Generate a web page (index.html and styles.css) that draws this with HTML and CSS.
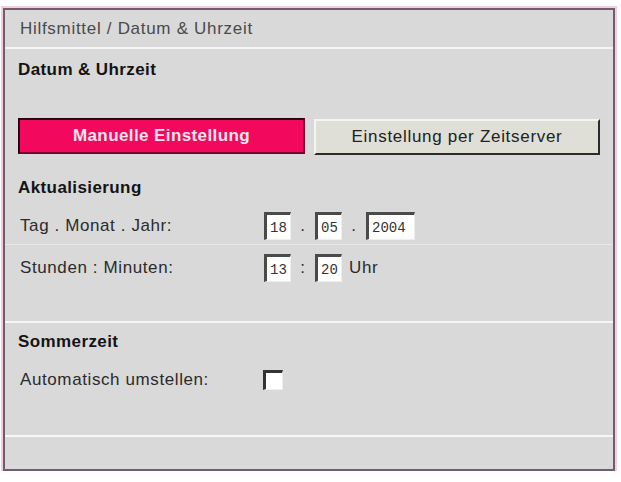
FILE: index.html
```html
<!DOCTYPE html>
<html lang="de">
<head>
  <meta charset="UTF-8">
  <title>Datum &amp; Uhrzeit</title>
  <link rel="stylesheet" href="styles.css">
</head>
<body>

  <div class="panel">
    <div class="crumb">Hilfsmittel / Datum &amp; Uhrzeit</div>

    <div class="section">
      <div class="title">Datum &amp; Uhrzeit</div>

      <div class="modes">
        <button class="mode active">Manuelle Einstellung</button>
        <button class="mode">Einstellung per Zeitserver</button>
      </div>

      <div class="title sub">Aktualisierung</div>

      <div class="row first">
        <span class="label">Tag . Monat . Jahr:</span>
        <input class="field" type="text" value="18">
        <span class="sep">.</span>
        <input class="field" type="text" value="05">
        <span class="sep">.</span>
        <input class="field wide" type="text" value="2004">
      </div>

      <div class="row second">
        <span class="label">Stunden : Minuten:</span>
        <input class="field" type="text" value="13">
        <span class="sep">:</span>
        <input class="field" type="text" value="20">
        <span class="unit">Uhr</span>
      </div>
    </div>

    <div class="section dst">
      <div class="title line">Sommerzeit</div>
      <div class="row line">
        <span class="label">Automatisch umstellen:</span>
        <input class="check" type="checkbox">
      </div>
    </div>
  </div>

</body>
</html>
```

FILE: styles.css
```css
body {
  margin: 0;
  background: #fff;
  font-family: "Liberation Sans", Arial, sans-serif;
  font-size: 17px;
  letter-spacing: 0.6px;
  color: #2b2b2b;
}

.panel {
  width: 608px;
  height: 459px;
  margin: 8px 0 0 3px;
  background: #d9d9d9;
  border: 2px solid #6f5c6c;
  box-shadow: 0 0 0 2px #f5cddb;
}

.crumb {
  height: 37px;
  line-height: 37px;
  padding-left: 15px;
  color: #4a4a4a;
  letter-spacing: 0.7px;
  border-bottom: 2px solid #f6f6f6;
}

.section {
  height: 272px;
  border-bottom: 2px solid #f6f6f6;
}

.title {
  height: 42px;
  line-height: 42px;
  padding-left: 13px;
  font-weight: bold;
  letter-spacing: 0.4px;
  color: #141414;
}

.title.sub {
  height: 26px;
  line-height: 26px;
  margin-top: 20px;
}

.modes {
  display: flex;
  gap: 9px;
  margin-top: 27px;
  padding-left: 13px;
}

.mode {
  width: 286px;
  height: 36px;
  margin-top: 1px;
  font-family: inherit;
  font-size: 17px;
  letter-spacing: 0.7px;
  color: #222;
  background: #dfdfd7;
  border: 2px solid;
  border-color: #f4f4f0 #2b2b2b #2b2b2b #f4f4f0;
}

.mode.active {
  width: 287px;
  margin-top: 0;
  font-weight: bold;
  letter-spacing: 0.4px;
  color: #fbe6f0;
  background: #f2085c;
  border-color: #26000e #7a0030 #7a0030 #26000e;
}

.row {
  display: flex;
  align-items: center;
  padding-left: 15px;
}

.row.first {
  height: 37px;
  padding-top: 6px;
  border-bottom: 1px solid #e9e9e9;
}

.row.second {
  height: 45px;
}

.label {
  width: 244px;
}

.field {
  box-sizing: border-box;
  width: 27px;
  height: 28px;
  padding: 3px 0 0 3px;
  font-family: "Liberation Mono", "Courier New", monospace;
  font-size: 14px;
  letter-spacing: 0;
  color: #333;
  background: #fff;
  border: 1px solid #eee;
  border-top: 3px solid #4a4a4a;
  border-left: 3px solid #4a4a4a;
}

.field.wide {
  width: 49px;
}

.sep {
  width: 24px;
  text-align: center;
}

.unit {
  margin-left: 7px;
}

.dst {
  height: 112px;
}

.title.line,
.row.line {
  height: 38px;
  line-height: 38px;
}

.check {
  appearance: none;
  width: 20px;
  height: 20px;
  margin: 0 0 0 -1px;
  background: #fff;
  border: 1px solid #eee;
  border-top: 3px solid #333;
  border-left: 3px solid #333;
  box-sizing: border-box;
}
```
